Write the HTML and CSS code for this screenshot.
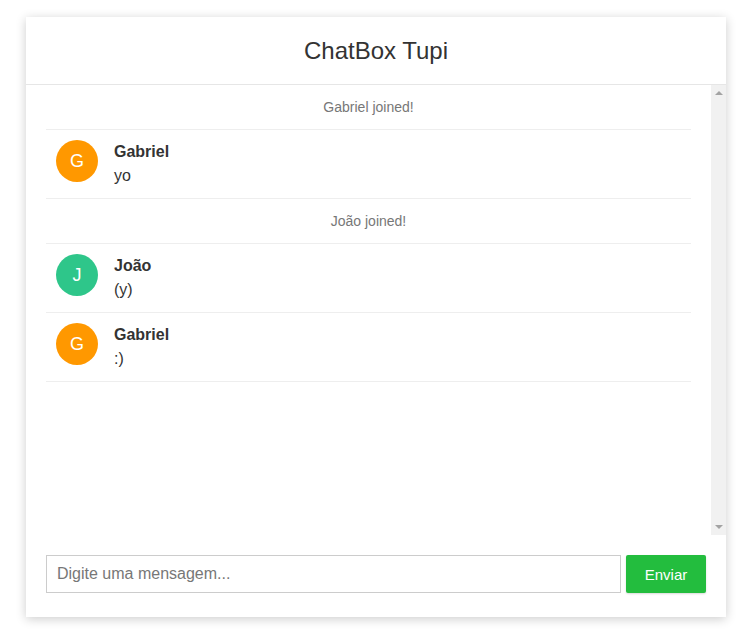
FILE: index.html
```html
<!DOCTYPE html>
<html lang="pt-BR">
<head>
  <meta charset="UTF-8" />
  <meta name="viewport" content="width=device-width, initial-scale=1.0" />
  <title>ChatBox Tupi</title>
  <link rel="stylesheet" href="styles.css">
</head>
<body>
  <div class="chatbox">
    <header class="chat-header">
      <h1>ChatBox Tupi</h1>
    </header>

    <div class="messages-wrap">
      <ul class="messages">
        <li class="notice">Gabriel joined!</li>
        <li class="message">
          <span class="avatar orange">G</span>
          <div class="body">
            <div class="author">Gabriel</div>
            <div class="text">yo</div>
          </div>
        </li>
        <li class="notice">João joined!</li>
        <li class="message">
          <span class="avatar green">J</span>
          <div class="body">
            <div class="author">João</div>
            <div class="text">(y)</div>
          </div>
        </li>
        <li class="message">
          <span class="avatar orange">G</span>
          <div class="body">
            <div class="author">Gabriel</div>
            <div class="text">:)</div>
          </div>
        </li>
      </ul>
      <!-- static scrollbar track (headless has overlay scrollbars) -->
      <div class="scrollbar">
        <span class="arrow up"></span>
        <span class="arrow down"></span>
      </div>
    </div>

    <form class="composer" onsubmit="return false">
      <input type="text" class="composer-input" placeholder="Digite uma mensagem...">
      <button type="submit" class="composer-send">Enviar</button>
    </form>
  </div>
</body>
</html>
```

FILE: styles.css
```css
/* ChatBox layout */
body {
  font-family: 'Liberation Sans', Arial, sans-serif;
  background-color: #fff;
  margin: 0;
  padding: 17px 26px;
  color: #333;
}
.chatbox {
  width: 700px;
  height: 600px;
  margin: 0 auto;
  background-color: #fff;
  box-shadow: 0 2px 10px rgba(0, 0, 0, 0.2);
  display: flex;
  flex-direction: column;
}
.chat-header {
  height: 67px;
  border-bottom: 1px solid #e6e6e6;
  display: flex;
  align-items: center;
  justify-content: center;
}
.chat-header h1 {
  margin: 0;
  font-size: 24px;
  font-weight: normal;
  color: #333;
}
.messages-wrap {
  display: flex;
  height: 450px;
}
.messages {
  flex: 1;
  list-style: none;
  margin: 0;
  padding: 0 20px;
  overflow: hidden;
}
.messages li {
  border-bottom: 1px solid #eee;
}
.notice {
  height: 44px;
  line-height: 44px;
  text-align: center;
  font-size: 14px;
  color: #777;
}
.message {
  height: 58px;
  display: flex;
  align-items: flex-start;
  padding: 10px 10px 0;
}
.avatar {
  width: 42px;
  height: 42px;
  border-radius: 50%;
  color: #fff;
  font-size: 18px;
  display: flex;
  align-items: center;
  justify-content: center;
  flex-shrink: 0;
  margin-right: 16px;
}
.avatar.orange {
  background-color: #ff9800;
}
.avatar.green {
  background-color: #2ec68a;
}
.body {
  padding-top: 2px;
}
.author {
  font-weight: bold;
  font-size: 16px;
  line-height: 20px;
  color: #333;
}
.text {
  font-size: 16px;
  line-height: 20px;
  margin-top: 4px;
  color: #333;
}
.scrollbar {
  width: 15px;
  background-color: #f1f1f1;
  display: flex;
  flex-direction: column;
  justify-content: space-between;
  align-items: center;
  padding: 6px 0;
  box-sizing: border-box;
}
.arrow {
  width: 0;
  height: 0;
  border-left: 4px solid transparent;
  border-right: 4px solid transparent;
}
.arrow.up {
  border-bottom: 4px solid #a3a3a3;
}
.arrow.down {
  border-top: 4px solid #a3a3a3;
}
.composer {
  display: flex;
  padding: 20px 20px 24px;
}
.composer-input {
  flex: 1;
  height: 38px;
  box-sizing: border-box;
  border: 1px solid #ccc;
  padding: 0 10px;
  font-family: inherit;
  font-size: 16px;
  color: #333;
  outline: none;
}
.composer-input::placeholder {
  color: #777;
}
.composer-send {
  width: 80px;
  height: 38px;
  margin-left: 5px;
  border: none;
  border-radius: 2px;
  background-color: #23bd3e;
  color: #fff;
  font-family: inherit;
  font-size: 15px;
  cursor: pointer;
  box-shadow: 0 1px 2px rgba(0, 0, 0, 0.15);
}
```
